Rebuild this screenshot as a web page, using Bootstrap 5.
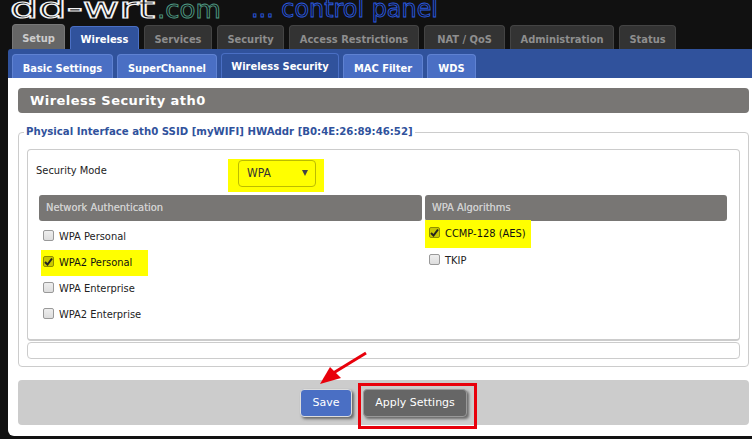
<!DOCTYPE html>
<html lang="en"><head><meta charset="utf-8"><title>DD-WRT</title>
<link href="https://cdn.jsdelivr.net/npm/bootstrap@5.3.0/dist/css/bootstrap.min.css" rel="stylesheet">
<style>
html,body{height:439px;overflow:hidden}
body{background:#111;font-family:"DejaVu Sans","Liberation Sans",sans-serif;font-stretch:condensed;font-size:11px;color:#222;position:relative}
.logo-strip{height:24px;overflow:hidden;position:relative}
.logo-art{display:block}
.main-tabs{height:25px;padding-left:12px;gap:5px;align-items:flex-end}
.main-tabs .nav-link{height:24px;padding:6px 0 0;text-align:center;background:#333;border:1px solid #444;border-bottom:0;border-radius:4px 4px 0 0;color:#8e8e8e;font-weight:700;font-size:11px;line-height:15px}
.main-tabs .tab-setup{background:#666;color:#ccc;height:25px;border-color:#777}
.main-tabs .tab-on{background:#30529c;color:#fff;height:23px;border-color:#4a6fc4;padding-top:5px}
.sub-band{height:29px;margin-left:8px;background:#30529c;padding-left:4px;gap:4px;align-items:flex-end;border-radius:3px 0 0 0}
.sub-band .nav-link{height:24px;padding:6px 0 0;text-align:center;background:#4a6fc4;border:1px solid #5f82d2;border-bottom:0;border-radius:4px 4px 0 0;color:#fff;font-weight:700;font-size:11px;line-height:15px}
.sub-band .sub-on{background:#30529c;border-color:#4a6fc4;height:25px;padding-top:5px}
.page-white{margin-left:8px;background:#fff;height:358px;padding:10px 3px 0 10px;border-radius:0 0 0 6px}
.head-bar{height:25px;background:#787674;border-radius:4px;color:#fff;font-weight:700;font-size:13px;letter-spacing:.45px;padding:4px 12px;line-height:17px;font-stretch:normal}
.outer-set{margin-top:19px;height:235px;border:1px solid #ccc;border-radius:4px;padding:16px 8px 0 8px;position:relative}
.legend-txt{position:absolute;left:5px;top:-9px;background:#fff;padding:0 2px;color:#30529c;font-weight:700;font-size:11.3px;line-height:16px;white-space:nowrap}
.inner-set{height:192px;border:1px solid #ccc;border-bottom-width:2px;border-radius:4px;padding:9px 12px 0 8px}
.blank-set{height:17px;margin-top:1px;border:1px solid #ccc;border-radius:4px}
.mode-row{height:35px}
.mode-lbl{width:192px;flex:none;padding-top:5px;line-height:14px;color:#222}
.mode-mark{background:#ff0;width:96px;height:33px;padding:1px 0 0 10px}
.mode-sel{width:78px;height:27px;border:1px solid #bcbc00;border-radius:4px;background:#ff0;color:#333;padding:4px 8px;font-size:12px;line-height:16px;position:relative}
.mode-sel span.arrow{position:absolute;right:7px;top:9px;width:0;height:0;border-left:3.5px solid transparent;border-right:3.5px solid transparent;border-top:6px solid #444}
.cols{margin-left:3px;gap:3px;margin-top:1px}
.col-net{width:383px}.col-alg{width:302px}
.col-head{height:26px;background:#787674;border-radius:3px;color:#cfcfcf;font-size:11px;padding:5px 7px;line-height:16px;text-shadow:0 0 .5px #cfcfcf}
.chk-line{height:26px;gap:5px;padding-left:4px;color:#222;align-items:center;font-size:11px;white-space:nowrap}
.row-first{margin-top:3px}
.chk-line.mark{background:#ff0;width:107px;margin-left:2px;padding-left:2px;color:#111}
.col-alg .chk-line.mark{margin:-1px 0 0;width:106px;padding-left:4px;height:28px}
.box{width:11px;height:11px;flex:none;border:1px solid #999;border-radius:2px;background:linear-gradient(#eee,#ddd);margin-top:-4px;display:flex;align-items:center;justify-content:center}
.mark .box{background:#c9c900;border-color:#8f8f00}
.act-bar{margin-top:13px;height:45px;background:#ccc;border-radius:4px;padding:9px 0 0 282px;gap:11px}
.btn.act-btn{height:28px;padding:0;font-size:11px;color:#fff;border:1px solid #ddd;border-radius:4px;box-shadow:2px 2px 3px #666;line-height:26px}
.act-save{width:52px;background:#4a6fc4}
.act-apply{width:104px;background:#666;border-color:#999!important}
.red-box{position:absolute;left:358px;top:383px;width:119px;height:46px;border:3px solid #e8000b;pointer-events:none}
.red-arrow{position:absolute;left:310px;top:345px;pointer-events:none}
</style></head><body>
<div class="logo-strip">
<svg class="logo-art" width="752" height="24" viewBox="0 0 752 24" role="img" aria-label="logo">
<text x="10" y="18" font-family="DejaVu Sans" font-size="29" textLength="145" lengthAdjust="spacingAndGlyphs" fill="#111" stroke="#f4f4f4" stroke-width="1.2">dd-wrt</text>
<text x="157" y="18" font-family="DejaVu Sans" font-size="25" textLength="64" lengthAdjust="spacingAndGlyphs" fill="#111" stroke="#4f9b84" stroke-width=".8">.com</text>
<text x="251" y="17" font-family="DejaVu Sans" font-size="24" textLength="187" lengthAdjust="spacingAndGlyphs" fill="#111" stroke="#2a5ae0" stroke-width=".8">... control panel</text>
</svg>
</div>
<nav class="nav main-tabs flex-nowrap">
<a class="nav-link tab-setup" style="width:53px" href="#">Setup</a>
<a class="nav-link tab-on" style="width:69px" href="#">Wireless</a>
<a class="nav-link" style="width:68px" href="#">Services</a>
<a class="nav-link" style="width:67px" href="#">Security</a>
<a class="nav-link" style="width:130px" href="#">Access Restrictions</a>
<a class="nav-link" style="width:81px" href="#">NAT / QoS</a>
<a class="nav-link" style="width:104px" href="#">Administration</a>
<a class="nav-link" style="width:57px" href="#">Status</a>
</nav>
<nav class="nav sub-band flex-nowrap">
<a class="nav-link" style="width:101px" href="#">Basic Settings</a>
<a class="nav-link" style="width:100px" href="#">SuperChannel</a>
<a class="nav-link sub-on" style="width:118px" href="#">Wireless Security</a>
<a class="nav-link" style="width:80px" href="#">MAC Filter</a>
<a class="nav-link" style="width:49px" href="#">WDS</a>
</nav>
<div class="page-white">
<div class="head-bar">Wireless Security ath0</div>
<div class="outer-set">
<div class="legend-txt">Physical Interface ath0 SSID [myWIFI] HWAddr [B0:4E:26:89:46:52]</div>
<div class="inner-set">
<div class="d-flex mode-row">
<div class="mode-lbl">Security Mode</div>
<div class="mode-mark"><div class="mode-sel">WPA<span class="arrow"></span></div></div>
</div>
<div class="d-flex cols">
<div class="col-net">
<div class="col-head">Network Authentication</div>
<div class="d-flex chk-line row-first"><span class="box"></span>WPA Personal</div>
<div class="d-flex chk-line mark"><span class="box"><svg width="9" height="9" viewBox="0 0 9 9"><path d="M1 5l2.500 2.500L8 1.500" fill="none" stroke="#222" stroke-width="2"/></svg></span>WPA2 Personal</div>
<div class="d-flex chk-line"><span class="box"></span>WPA Enterprise</div>
<div class="d-flex chk-line"><span class="box"></span>WPA2 Enterprise</div>
</div>
<div class="col-alg">
<div class="col-head">WPA Algorithms</div>
<div class="d-flex chk-line mark"><span class="box"><svg width="9" height="9" viewBox="0 0 9 9"><path d="M1 5l2.500 2.500L8 1.500" fill="none" stroke="#222" stroke-width="2"/></svg></span>CCMP-128 (AES)</div>
<div class="d-flex chk-line"><span class="box"></span>TKIP</div>
</div>
</div>
</div>
<div class="blank-set"></div>
</div>
<div class="d-flex act-bar">
<button type="button" class="btn act-btn act-save">Save</button>
<button type="button" class="btn act-btn act-apply">Apply Settings</button>
</div>
</div>
<div class="red-box"></div>
<svg class="red-arrow" width="64" height="44" viewBox="0 0 64 44"><path d="M56 8L20 30" stroke="#e8000b" stroke-width="3" fill="none"/><path d="M10 39L20 22L31 33Z" fill="#e8000b"/></svg>
</body></html>
